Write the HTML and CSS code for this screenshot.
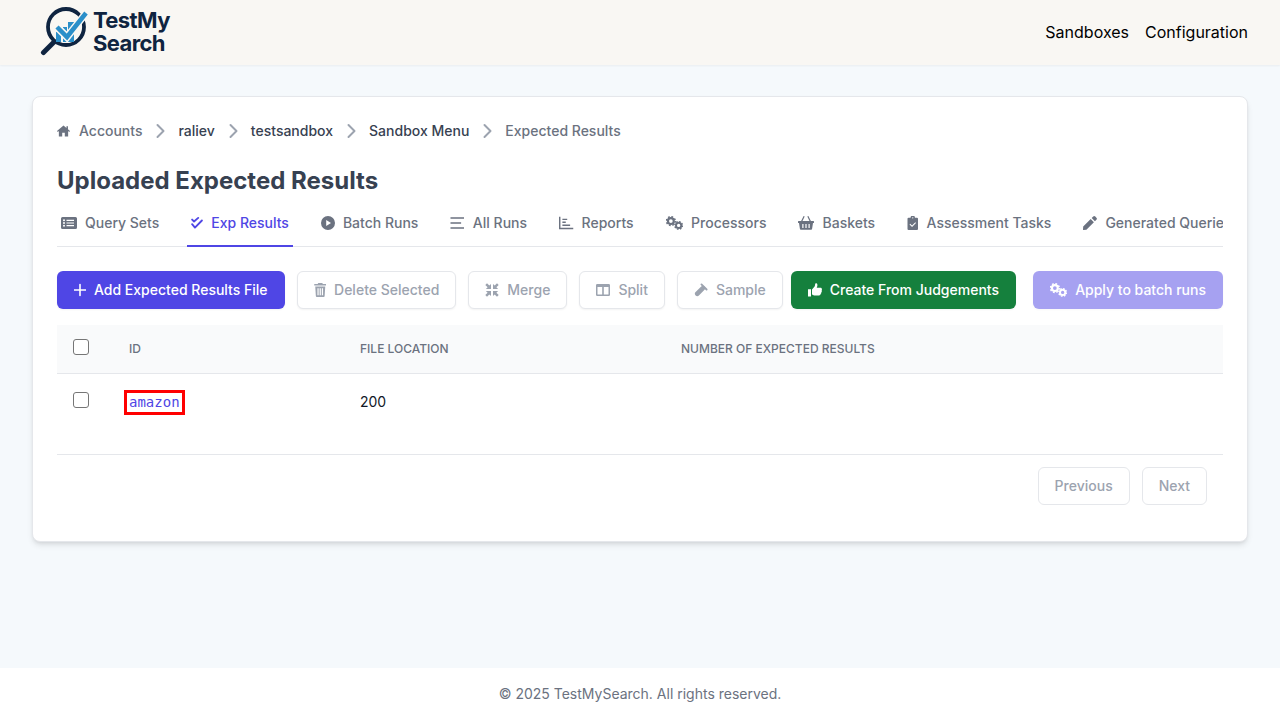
FILE: index.html
```html
<!DOCTYPE html>
<html lang="en">
<head>
<meta charset="utf-8">
<title>Uploaded Expected Results</title>
<link rel="stylesheet" href="styles.css">
</head>
<body>
<svg class="sprite" aria-hidden="true">
  <symbol id="i-home" viewBox="0 0 14 12"><path d="M7 0 0 6l.8 1L2 6v6h3.600V8h2.800v4H12V6l1.200 1 .8-1-2.200-1.900V1h-1.600v1.700z"/></symbol>
  <symbol id="i-chev" viewBox="0 0 24 24"><path d="M9.500 6l6 6-6 6" fill="none" stroke="currentColor" stroke-width="2" stroke-linecap="round" stroke-linejoin="round"/></symbol>
  <symbol id="i-list" viewBox="0 0 16 12"><path fill-rule="evenodd" d="M1.500 0h13A1.500 1.500 0 0 1 16 1.500v9a1.500 1.500 0 0 1-1.500 1.500h-13A1.500 1.500 0 0 1 0 10.500v-9A1.500 1.500 0 0 1 1.500 0zM3 2.300a1 1 0 1 0 0 2 1 1 0 0 0 0-2zm0 2.700a1 1 0 1 0 0 2 1 1 0 0 0 0-2zm0 2.700a1 1 0 1 0 0 2 1 1 0 0 0 0-2zM5.500 2.700v1.200h7.500V2.700zm0 2.700v1.200h7.500V5.400zm0 2.700v1.200h7.500V8.100z"/></symbol>
  <symbol id="i-check2" viewBox="0 0 13 13"><path d="M1.200 2.800 3.300 4.900 7.800 1M1.200 7.800 4.300 11.500 11.800 3.800" fill="none" stroke="currentColor" stroke-width="2" stroke-linecap="round" stroke-linejoin="round"/></symbol>
  <symbol id="i-play" viewBox="0 0 14 14"><path fill-rule="evenodd" d="M7 0a7 7 0 1 1 0 14A7 7 0 0 1 7 0zM5.200 3.900v6.200L10 7z"/></symbol>
  <symbol id="i-bars" viewBox="0 0 15 12"><path d="M.5 0h14v1.500H.5zM.5 5.250h11v1.500H.5zM.5 10.500h14V12H.5z"/></symbol>
  <symbol id="i-chart" viewBox="0 0 15 13"><path d="M0 0h1.500v11.500H15V13H0zM3.500 2h5v1.500h-5zM3.500 5h3.500v1.500H3.500zM3.500 8h8v1.500h-8z"/></symbol>
  <symbol id="i-cogs" viewBox="0 0 18 14">
    <circle cx="5" cy="5" r="3" fill="none" stroke="currentColor" stroke-width="2.200"/>
    <circle cx="5" cy="5" r="4.500" fill="none" stroke="currentColor" stroke-width="1.600" stroke-dasharray="1.800 1.730"/>
    <circle cx="13" cy="9.500" r="2.700" fill="none" stroke="currentColor" stroke-width="2"/>
    <circle cx="13" cy="9.500" r="3.900" fill="none" stroke="currentColor" stroke-width="1.600" stroke-dasharray="1.600 1.460"/>
  </symbol>
  <symbol id="i-basket" viewBox="0 0 16 14"><path fill-rule="evenodd" d="M5.600 0 6.700.6 4.500 5h7L9.300.6 10.400 0l2.500 5H15.400a.6.600 0 0 1 .6.600v.8a.6.600 0 0 1-.6.600H15l-.9 5.800a1 1 0 0 1-1 .9H2.900a1 1 0 0 1-1-.9L1 7H.6A.6.600 0 0 1 0 6.400v-.8A.6.600 0 0 1 .6 5h2.500zM4.300 8v4h1.200V8zm3.100 0v4h1.200V8zm3.100 0v4h1.200V8z"/></symbol>
  <symbol id="i-clip" viewBox="0 0 12 16"><path fill-rule="evenodd" d="M1.200 2H3.500a2.500 2.500 0 0 1 5 0h2.300A1.200 1.200 0 0 1 12 3.200v11.600a1.200 1.200 0 0 1-1.200 1.200H1.200A1.200 1.200 0 0 1 0 14.800V3.200A1.200 1.200 0 0 1 1.200 2zM6 1.300a.8.800 0 1 0 0 1.600.8.800 0 0 0 0-1.600zM8.900 7.200 5.200 10.800 3.100 8.900l-.8.800 2.900 2.800 4.500-4.500z"/></symbol>
  <symbol id="i-pen" viewBox="0 0 14 14"><path d="M10.200.6a1.500 1.500 0 0 1 2.100 0l1.100 1.100a1.500 1.500 0 0 1 0 2.100L11.900 5.300 8.700 2.100zM7.700 3.100l3.200 3.200-7.500 7.500-3.100.2a.3.300 0 0 1-.3-.3l.2-3.100z"/></symbol>
  <symbol id="i-plus" viewBox="0 0 12 12"><path d="M6 .5v11M.5 6h11" fill="none" stroke="currentColor" stroke-width="1.600" stroke-linecap="round"/></symbol>
  <symbol id="i-trash" viewBox="0 0 12 14"><path fill-rule="evenodd" d="M4 0h4l.6 1H12v1.600H0V1h3.400zM1 3.500h10l-.6 9.500a1 1 0 0 1-1 1H2.600a1 1 0 0 1-1-1zM3.200 5.200v7h1.200v-7zm2.200 0v7h1.200v-7zm2.200 0v7h1.200v-7z"/></symbol>
  <symbol id="i-merge" viewBox="0 0 14 14"><path d="M6 6H.9L2.600 4.300.3 2 2 .3l2.300 2.300L6 .9zM8 6h5.100l-1.700-1.700L13.700 2 12 .3 9.700 2.600 8 .9zM6 8H.9l1.700 1.700L.3 12 2 13.700l2.300-2.300L6 13.100zM8 8h5.100l-1.700 1.700 2.300 2.300-1.700 1.700-2.300-2.300L8 13.100z"/></symbol>
  <symbol id="i-cols" viewBox="0 0 14 12"><path fill-rule="evenodd" d="M1.300 0h11.400A1.300 1.300 0 0 1 14 1.300v9.400a1.300 1.300 0 0 1-1.300 1.300H1.300A1.300 1.300 0 0 1 0 10.700V1.300A1.300 1.300 0 0 1 1.300 0zM1.500 3v7.500h4.700V3zm6.300 0v7.500h4.700V3z"/></symbol>
  <symbol id="i-vial" viewBox="0 0 15 15"><path d="M3.500 11.500 9.500 5.500" fill="none" stroke="currentColor" stroke-width="5" stroke-linecap="round"/><path d="M8 1.500 13.500 7" fill="none" stroke="currentColor" stroke-width="2" stroke-linecap="round"/></symbol>
  <symbol id="i-thumb" viewBox="0 0 14 14"><path d="M0 6.200h3v7.300H0zM4 6.500 6.600 3.500C7.100 2.800 7 1.800 7.200.8 7.300.2 8 0 8.500.3c1 .6 1.200 2 .7 3.200l-.5 1.200h3.700c.9 0 1.600.7 1.600 1.500 0 .4-.2.800-.4 1 .3.300.4.700.3 1.100-.1.400-.3.700-.6.900.1.400.1.800-.1 1.100-.2.300-.4.500-.7.600.1.400 0 .800-.3 1.100-.3.300-.7.500-1.200.5H7.200c-1.300 0-2.300-.5-3.200-1z"/></symbol>
</svg>

<header class="topbar">
  <a class="logo">
    <svg class="logo-mark" viewBox="0 0 50 53" aria-hidden="true">
      <path d="M15 36 3.500 47.500" fill="none" stroke="#0f2440" stroke-width="5" stroke-linecap="round"/>
      <circle cx="26" cy="22" r="18" fill="#f9f7f3" stroke="#0f2440" stroke-width="3.800"/>
      <path d="M16 27h5v10h-5zM23 22h4v15h-4zM28 17h6v20h-6z" fill="#2b8fc9"/>
      <path d="M17 22l10 10L46 8" fill="none" stroke="#f9f7f3" stroke-width="7.500"/>
      <path d="M17 22l10 10L46 8" fill="none" stroke="#2b8fc9" stroke-width="4.500"/>
    </svg>
    <span class="logo-text">TestMy<br>Search</span>
  </a>
  <nav class="topnav">
    <a>Sandboxes</a>
    <a>Configuration</a>
  </nav>
</header>

<main class="page">
  <section class="card">
    <ol class="crumbs">
      <li class="crumb muted"><svg class="ic-home"><use href="#i-home"/></svg><span class="home-label">Accounts</span></li>
      <li class="sep"><svg><use href="#i-chev"/></svg></li>
      <li class="crumb">raliev</li>
      <li class="sep"><svg><use href="#i-chev"/></svg></li>
      <li class="crumb">testsandbox</li>
      <li class="sep"><svg><use href="#i-chev"/></svg></li>
      <li class="crumb">Sandbox Menu</li>
      <li class="sep"><svg><use href="#i-chev"/></svg></li>
      <li class="crumb muted">Expected Results</li>
    </ol>

    <h1 class="title">Uploaded Expected Results</h1>

    <nav class="tabs">
      <a class="tab"><svg class="w16"><use href="#i-list"/></svg>Query Sets</a>
      <a class="tab active"><svg class="w12"><use href="#i-check2"/></svg>Exp Results</a>
      <a class="tab"><svg class="w14"><use href="#i-play"/></svg>Batch Runs</a>
      <a class="tab"><svg class="w14h"><use href="#i-bars"/></svg>All Runs</a>
      <a class="tab"><svg class="w14h"><use href="#i-chart"/></svg>Reports</a>
      <a class="tab"><svg class="w17h"><use href="#i-cogs"/></svg>Processors</a>
      <a class="tab"><svg class="w16"><use href="#i-basket"/></svg>Baskets</a>
      <a class="tab"><svg class="w11"><use href="#i-clip"/></svg>Assessment Tasks</a>
      <a class="tab"><svg class="w14"><use href="#i-pen"/></svg>Generated Queries</a>
    </nav>

    <div class="toolbar">
      <div class="tool-group">
        <button class="btn primary"><svg class="w12"><use href="#i-plus"/></svg>Add Expected Results File</button>
        <button class="btn off"><svg class="w12h"><use href="#i-trash"/></svg>Delete Selected</button>
        <button class="btn off"><svg class="w14"><use href="#i-merge"/></svg>Merge</button>
        <button class="btn off"><svg class="w14"><use href="#i-cols"/></svg>Split</button>
        <div class="tool-pair">
          <button class="btn off"><svg class="w14"><use href="#i-vial"/></svg>Sample</button>
          <button class="btn success"><svg class="w14"><use href="#i-thumb"/></svg>Create From Judgements</button>
        </div>
      </div>
      <button class="btn primary faded"><svg class="w17h"><use href="#i-cogs"/></svg>Apply to batch runs</button>
    </div>

    <table class="grid">
      <thead>
        <tr>
          <th class="c-check"><span class="box"></span></th>
          <th class="c-id">ID</th>
          <th class="c-file">File Location</th>
          <th>Number of Expected Results</th>
        </tr>
      </thead>
      <tbody>
        <tr>
          <td class="c-check"><span class="box"></span></td>
          <td class="c-id"><a class="hit">amazon</a></td>
          <td class="c-file">200</td>
          <td></td>
        </tr>
      </tbody>
    </table>

    <div class="pager">
      <button class="btn off plain">Previous</button>
      <button class="btn off plain">Next</button>
    </div>
  </section>
</main>

<footer class="foot">© 2025 TestMySearch. All rights reserved.</footer>
</body>
</html>
```

FILE: styles.css
```css
* { box-sizing: border-box; }

html, body { margin: 0; height: 100%; }

body {
  display: flex;
  flex-direction: column;
  min-height: 100vh;
  background: #f5f9fc;
  color: #111827;
  font-family: Inter, "Liberation Sans", sans-serif;
  font-size: 14px;
  line-height: 20px;
}

.sprite { display: none; }

svg { fill: currentColor; flex: none; }

.topbar {
  display: flex;
  align-items: center;
  justify-content: space-between;
  height: 65px;
  padding: 0 32px 2px 40px;
  background: #f9f7f3;
  box-shadow: 0 1px 2px rgba(0, 0, 0, 0.05);
}

.logo { display: flex; align-items: center; gap: 3px; }
.logo-mark { width: 50px; height: 53px; }
.logo-text {
  color: #0f2440;
  font-size: 22px;
  font-weight: 700;
  line-height: 23px;
  letter-spacing: -0.6px;
}

.topnav { display: flex; gap: 16px; font-size: 16px; line-height: 24px; color: #000; }

.page { flex: 1; padding: 31px 32px 0; }

.card {
  background: #fff;
  border: 1px solid #e5e7eb;
  border-radius: 8px;
  padding: 24px;
  box-shadow: 0 4px 6px -1px rgba(0, 0, 0, 0.1), 0 2px 4px -2px rgba(0, 0, 0, 0.1);
}

.crumbs {
  display: flex;
  align-items: center;
  gap: 6px;
  height: 20px;
  margin: 0;
  padding: 0;
  list-style: none;
  font-weight: 500;
  color: #374151;
}
.crumb { display: flex; align-items: center; }
.muted { color: #6b7280; }
.ic-home { width: 13px; height: 12px; }
.home-label { margin-left: 9px; }
.sep { display: flex; color: #9ca3af; }
.sep svg { width: 24px; height: 24px; }

.title {
  margin: 24px 0 0;
  font-size: 24px;
  line-height: 32px;
  font-weight: 700;
  color: #374151;
}

.tabs {
  display: flex;
  gap: 24px;
  overflow: hidden;
  box-shadow: inset 0 -1px 0 #e5e7eb;
}
.tab {
  display: flex;
  align-items: center;
  flex: none;
  gap: 8px;
  padding: 16px 4px 12px;
  border-bottom: 2px solid transparent;
  color: #6b7280;
  font-weight: 500;
}
.tab.active { color: #4f46e5; border-bottom-color: #4f46e5; }

.w11 { width: 11.5px; height: 14px; }
.w12 { width: 12px; height: 14px; }
.w12h { width: 12.5px; height: 14px; }
.w14 { width: 14px; height: 14px; }
.w14h { width: 14.5px; height: 14px; }
.w16 { width: 16px; height: 14px; }
.w17h { width: 17.5px; height: 14px; }

.toolbar {
  display: flex;
  justify-content: space-between;
  margin-top: 24px;
}
.tool-group, .tool-pair { display: flex; }
.tool-group { gap: 12px; }
.tool-pair { gap: 8px; }

.btn {
  display: inline-flex;
  align-items: center;
  gap: 8px;
  height: 38px;
  padding: 0 16px;
  border: 1px solid transparent;
  border-radius: 6px;
  font: 500 14px/20px Inter, "Liberation Sans", sans-serif;
  box-shadow: 0 1px 2px rgba(0, 0, 0, 0.05);
}
.primary { background: #4f46e5; color: #fff; }
.faded { opacity: 0.5; }
.success { background: #15803d; color: #fff; }
.off { background: #fff; border-color: #e5e7eb; color: #9ca3af; }

.grid {
  width: 100%;
  margin-top: 16px;
  border-collapse: collapse;
  table-layout: fixed;
}
.grid th {
  height: 48px;
  padding: 0 16px;
  background: #f9fafb;
  border-bottom: 1px solid #e5e7eb;
  color: #6b7280;
  font-size: 12px;
  font-weight: 500;
  text-align: left;
  text-transform: uppercase;
}
.grid td { padding: 16px; vertical-align: middle; }
.c-check { width: 56px; }
.c-id { width: 231px; }
.c-file { width: 321px; }

.box {
  display: block;
  width: 16px;
  height: 16px;
  border: 1px solid #767676;
  border-radius: 3px;
  background: #fff;
}
.grid th .box { position: relative; top: -2px; }
.grid td .box { position: relative; top: -2px; }

.hit {
  display: inline-block;
  margin-left: -5px;
  padding: 1px 2px;
  border: 3px solid #f00;
  color: #4f46e5;
  font-family: "DejaVu Sans Mono", "Liberation Mono", monospace;
  font-size: 14px;
  line-height: 17px;
}

.pager {
  display: flex;
  justify-content: flex-end;
  gap: 12px;
  margin-top: 23px;
  padding: 12px 16px;
  border-top: 1px solid #e5e7eb;
}
.plain { box-shadow: none; }

.foot {
  padding: 16px;
  background: #fff;
  color: #6b7280;
  text-align: center;
}
```
